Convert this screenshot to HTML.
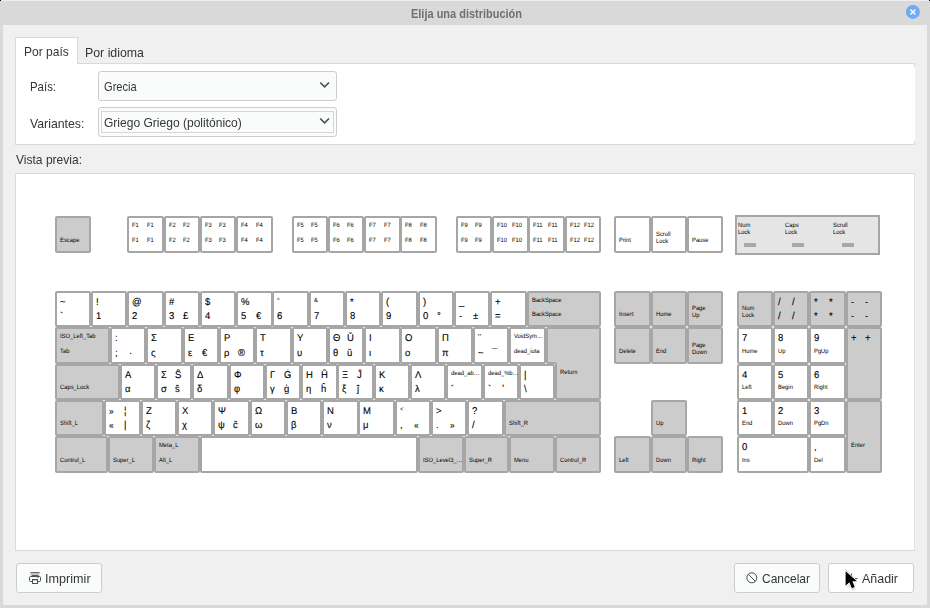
<!DOCTYPE html>
<html><head><meta charset="utf-8"><style>
html,body{margin:0;padding:0;width:930px;height:608px;overflow:hidden;background:#d9d9d9;}
body{position:relative;font-family:"Liberation Sans",sans-serif;}
.t{position:absolute;white-space:nowrap;transform-origin:0 0;line-height:1;}
.a{position:absolute;box-sizing:border-box;}
</style></head><body>
<div class="a" style="left:0;top:0;width:930px;height:1px;background:#efefef"></div>
<div class="a" style="left:0;top:0;width:1px;height:1px;background:#000"></div>
<div class="a" style="left:929px;top:0;width:1px;height:1px;background:#000"></div>
<div class="a" style="left:3px;top:25px;width:924px;height:580px;background:#f0f0f0"></div>
<!-- close button -->
<svg class="a" style="left:0;top:0" width="930" height="608">
<circle cx="912.9" cy="11.9" r="7" fill="#6eabf5"/>
<path d="M910.4,9.4 L915.4,14.4 M915.4,9.4 L910.4,14.4" stroke="#fff" stroke-width="1.4"/>
</svg>
<!-- notebook -->
<div class="a" style="left:15px;top:63px;width:900px;height:82px;background:#fff;border:1px solid #d9d9d9;border-right:none"></div>
<div class="a" style="left:914px;top:63px;width:1px;height:4px;background:#d9d9d9"></div>
<div class="a" style="left:914px;top:141px;width:1px;height:4px;background:#d9d9d9"></div>
<div class="a" style="left:15px;top:37px;width:63px;height:27px;background:#fff;border:1px solid #d9d9d9;border-bottom:none"></div>
<!-- combos -->
<div class="a" style="left:98px;top:71px;width:239px;height:30px;background:#fafbfb;border:1px solid #cdcdcd;border-radius:3px"></div>
<div class="a" style="left:98px;top:107px;width:239px;height:30px;background:#fafbfb;border:1px solid #cdcdcd;border-radius:3px"></div>
<div class="a" style="left:101px;top:111px;width:233px;height:22px;border:1px solid #d6d6d6"></div>
<svg class="a" style="left:0;top:0" width="930" height="608">
<path d="M320.2,82.5 L324.6,86.9 L329,82.5" fill="none" stroke="#4d4d4d" stroke-width="1.6"/>
<path d="M320.2,118.5 L324.6,122.9 L329,118.5" fill="none" stroke="#4d4d4d" stroke-width="1.6"/>
</svg>
<!-- preview -->
<div class="a" style="left:15px;top:173px;width:900px;height:378px;background:#fff;border:1px solid #dadada;border-right-color:#e3e3e3"></div>
<svg class="a" style="left:0;top:0" width="930" height="608">
<rect x="56" y="217" width="34" height="35" rx="1" fill="#cccccc"/>
<rect x="56" y="217" width="34" height="35" rx="1" fill="none" stroke="#a6a6a6" stroke-width="2"/>
<rect x="128" y="217" width="35" height="35" rx="1" fill="#ffffff"/>
<rect x="128" y="217" width="35" height="35" rx="1" fill="none" stroke="#a6a6a6" stroke-width="2"/>
<rect x="165" y="217" width="34" height="35" rx="1" fill="#ffffff"/>
<rect x="165" y="217" width="34" height="35" rx="1" fill="none" stroke="#a6a6a6" stroke-width="2"/>
<rect x="201" y="217" width="34" height="35" rx="1" fill="#ffffff"/>
<rect x="201" y="217" width="34" height="35" rx="1" fill="none" stroke="#a6a6a6" stroke-width="2"/>
<rect x="237" y="217" width="35" height="35" rx="1" fill="#ffffff"/>
<rect x="237" y="217" width="35" height="35" rx="1" fill="none" stroke="#a6a6a6" stroke-width="2"/>
<rect x="293" y="217" width="34" height="35" rx="1" fill="#ffffff"/>
<rect x="293" y="217" width="34" height="35" rx="1" fill="none" stroke="#a6a6a6" stroke-width="2"/>
<rect x="329" y="217" width="34" height="35" rx="1" fill="#ffffff"/>
<rect x="329" y="217" width="34" height="35" rx="1" fill="none" stroke="#a6a6a6" stroke-width="2"/>
<rect x="365" y="217" width="35" height="35" rx="1" fill="#ffffff"/>
<rect x="365" y="217" width="35" height="35" rx="1" fill="none" stroke="#a6a6a6" stroke-width="2"/>
<rect x="401" y="217" width="35" height="35" rx="1" fill="#ffffff"/>
<rect x="401" y="217" width="35" height="35" rx="1" fill="none" stroke="#a6a6a6" stroke-width="2"/>
<rect x="457" y="217" width="34" height="35" rx="1" fill="#ffffff"/>
<rect x="457" y="217" width="34" height="35" rx="1" fill="none" stroke="#a6a6a6" stroke-width="2"/>
<rect x="493" y="217" width="35" height="35" rx="1" fill="#ffffff"/>
<rect x="493" y="217" width="35" height="35" rx="1" fill="none" stroke="#a6a6a6" stroke-width="2"/>
<rect x="529" y="217" width="35" height="35" rx="1" fill="#ffffff"/>
<rect x="529" y="217" width="35" height="35" rx="1" fill="none" stroke="#a6a6a6" stroke-width="2"/>
<rect x="566" y="217" width="34" height="35" rx="1" fill="#ffffff"/>
<rect x="566" y="217" width="34" height="35" rx="1" fill="none" stroke="#a6a6a6" stroke-width="2"/>
<rect x="615" y="217" width="35" height="35" rx="1" fill="#ffffff"/>
<rect x="615" y="217" width="35" height="35" rx="1" fill="none" stroke="#a6a6a6" stroke-width="2"/>
<rect x="652" y="217" width="34" height="35" rx="1" fill="#ffffff"/>
<rect x="652" y="217" width="34" height="35" rx="1" fill="none" stroke="#a6a6a6" stroke-width="2"/>
<rect x="688" y="217" width="34" height="35" rx="1" fill="#ffffff"/>
<rect x="688" y="217" width="34" height="35" rx="1" fill="none" stroke="#a6a6a6" stroke-width="2"/>
<rect x="56" y="292" width="34" height="34" rx="1" fill="#ffffff"/>
<rect x="56" y="292" width="34" height="34" rx="1" fill="none" stroke="#a6a6a6" stroke-width="2"/>
<rect x="92" y="292" width="34" height="34" rx="1" fill="#ffffff"/>
<rect x="92" y="292" width="34" height="34" rx="1" fill="none" stroke="#a6a6a6" stroke-width="2"/>
<rect x="128" y="292" width="35" height="34" rx="1" fill="#ffffff"/>
<rect x="128" y="292" width="35" height="34" rx="1" fill="none" stroke="#a6a6a6" stroke-width="2"/>
<rect x="165" y="292" width="34" height="34" rx="1" fill="#ffffff"/>
<rect x="165" y="292" width="34" height="34" rx="1" fill="none" stroke="#a6a6a6" stroke-width="2"/>
<rect x="201" y="292" width="34" height="34" rx="1" fill="#ffffff"/>
<rect x="201" y="292" width="34" height="34" rx="1" fill="none" stroke="#a6a6a6" stroke-width="2"/>
<rect x="237" y="292" width="35" height="34" rx="1" fill="#ffffff"/>
<rect x="237" y="292" width="35" height="34" rx="1" fill="none" stroke="#a6a6a6" stroke-width="2"/>
<rect x="273" y="292" width="35" height="34" rx="1" fill="#ffffff"/>
<rect x="273" y="292" width="35" height="34" rx="1" fill="none" stroke="#a6a6a6" stroke-width="2"/>
<rect x="310" y="292" width="34" height="34" rx="1" fill="#ffffff"/>
<rect x="310" y="292" width="34" height="34" rx="1" fill="none" stroke="#a6a6a6" stroke-width="2"/>
<rect x="346" y="292" width="34" height="34" rx="1" fill="#ffffff"/>
<rect x="346" y="292" width="34" height="34" rx="1" fill="none" stroke="#a6a6a6" stroke-width="2"/>
<rect x="382" y="292" width="35" height="34" rx="1" fill="#ffffff"/>
<rect x="382" y="292" width="35" height="34" rx="1" fill="none" stroke="#a6a6a6" stroke-width="2"/>
<rect x="419" y="292" width="34" height="34" rx="1" fill="#ffffff"/>
<rect x="419" y="292" width="34" height="34" rx="1" fill="none" stroke="#a6a6a6" stroke-width="2"/>
<rect x="455" y="292" width="34" height="34" rx="1" fill="#ffffff"/>
<rect x="455" y="292" width="34" height="34" rx="1" fill="none" stroke="#a6a6a6" stroke-width="2"/>
<rect x="491" y="292" width="35" height="34" rx="1" fill="#ffffff"/>
<rect x="491" y="292" width="35" height="34" rx="1" fill="none" stroke="#a6a6a6" stroke-width="2"/>
<rect x="528" y="292" width="72" height="34" rx="1" fill="#cccccc"/>
<rect x="528" y="292" width="72" height="34" rx="1" fill="none" stroke="#a6a6a6" stroke-width="2"/>
<rect x="56" y="328" width="53" height="35" rx="1" fill="#cccccc"/>
<rect x="56" y="328" width="53" height="35" rx="1" fill="none" stroke="#a6a6a6" stroke-width="2"/>
<rect x="111" y="328" width="34" height="35" rx="1" fill="#ffffff"/>
<rect x="111" y="328" width="34" height="35" rx="1" fill="none" stroke="#a6a6a6" stroke-width="2"/>
<rect x="147" y="328" width="35" height="35" rx="1" fill="#ffffff"/>
<rect x="147" y="328" width="35" height="35" rx="1" fill="none" stroke="#a6a6a6" stroke-width="2"/>
<rect x="184" y="328" width="34" height="35" rx="1" fill="#ffffff"/>
<rect x="184" y="328" width="34" height="35" rx="1" fill="none" stroke="#a6a6a6" stroke-width="2"/>
<rect x="220" y="328" width="34" height="35" rx="1" fill="#ffffff"/>
<rect x="220" y="328" width="34" height="35" rx="1" fill="none" stroke="#a6a6a6" stroke-width="2"/>
<rect x="256" y="328" width="35" height="35" rx="1" fill="#ffffff"/>
<rect x="256" y="328" width="35" height="35" rx="1" fill="none" stroke="#a6a6a6" stroke-width="2"/>
<rect x="293" y="328" width="34" height="35" rx="1" fill="#ffffff"/>
<rect x="293" y="328" width="34" height="35" rx="1" fill="none" stroke="#a6a6a6" stroke-width="2"/>
<rect x="329" y="328" width="34" height="35" rx="1" fill="#ffffff"/>
<rect x="329" y="328" width="34" height="35" rx="1" fill="none" stroke="#a6a6a6" stroke-width="2"/>
<rect x="365" y="328" width="35" height="35" rx="1" fill="#ffffff"/>
<rect x="365" y="328" width="35" height="35" rx="1" fill="none" stroke="#a6a6a6" stroke-width="2"/>
<rect x="401" y="328" width="35" height="35" rx="1" fill="#ffffff"/>
<rect x="401" y="328" width="35" height="35" rx="1" fill="none" stroke="#a6a6a6" stroke-width="2"/>
<rect x="438" y="328" width="34" height="35" rx="1" fill="#ffffff"/>
<rect x="438" y="328" width="34" height="35" rx="1" fill="none" stroke="#a6a6a6" stroke-width="2"/>
<rect x="474" y="328" width="34" height="35" rx="1" fill="#ffffff"/>
<rect x="474" y="328" width="34" height="35" rx="1" fill="none" stroke="#a6a6a6" stroke-width="2"/>
<rect x="510" y="328" width="35" height="35" rx="1" fill="#ffffff"/>
<rect x="510" y="328" width="35" height="35" rx="1" fill="none" stroke="#a6a6a6" stroke-width="2"/>
<path d="M547.0,329.0 Q547,328 548.0,328.0 L599.0,328.0 Q600,328 600.0,329.0 L600.0,398.0 Q600,399 599.0,399.0 L557.0,399.0 Q556,399 556.0,398.0 L556.0,364.0 Q556,363 555.0,363.0 L548.0,363.0 Q547,363 547.0,362.0 Z" fill="#cccccc" stroke="#a6a6a6" stroke-width="2"/>
<rect x="56" y="365" width="63" height="34" rx="1" fill="#cccccc"/>
<rect x="56" y="365" width="63" height="34" rx="1" fill="none" stroke="#a6a6a6" stroke-width="2"/>
<rect x="121" y="365" width="34" height="34" rx="1" fill="#ffffff"/>
<rect x="121" y="365" width="34" height="34" rx="1" fill="none" stroke="#a6a6a6" stroke-width="2"/>
<rect x="157" y="365" width="34" height="34" rx="1" fill="#ffffff"/>
<rect x="157" y="365" width="34" height="34" rx="1" fill="none" stroke="#a6a6a6" stroke-width="2"/>
<rect x="193" y="365" width="35" height="34" rx="1" fill="#ffffff"/>
<rect x="193" y="365" width="35" height="34" rx="1" fill="none" stroke="#a6a6a6" stroke-width="2"/>
<rect x="230" y="365" width="34" height="34" rx="1" fill="#ffffff"/>
<rect x="230" y="365" width="34" height="34" rx="1" fill="none" stroke="#a6a6a6" stroke-width="2"/>
<rect x="266" y="365" width="34" height="34" rx="1" fill="#ffffff"/>
<rect x="266" y="365" width="34" height="34" rx="1" fill="none" stroke="#a6a6a6" stroke-width="2"/>
<rect x="302" y="365" width="35" height="34" rx="1" fill="#ffffff"/>
<rect x="302" y="365" width="35" height="34" rx="1" fill="none" stroke="#a6a6a6" stroke-width="2"/>
<rect x="338" y="365" width="35" height="34" rx="1" fill="#ffffff"/>
<rect x="338" y="365" width="35" height="34" rx="1" fill="none" stroke="#a6a6a6" stroke-width="2"/>
<rect x="375" y="365" width="34" height="34" rx="1" fill="#ffffff"/>
<rect x="375" y="365" width="34" height="34" rx="1" fill="none" stroke="#a6a6a6" stroke-width="2"/>
<rect x="411" y="365" width="34" height="34" rx="1" fill="#ffffff"/>
<rect x="411" y="365" width="34" height="34" rx="1" fill="none" stroke="#a6a6a6" stroke-width="2"/>
<rect x="447" y="365" width="35" height="34" rx="1" fill="#ffffff"/>
<rect x="447" y="365" width="35" height="34" rx="1" fill="none" stroke="#a6a6a6" stroke-width="2"/>
<rect x="484" y="365" width="34" height="34" rx="1" fill="#ffffff"/>
<rect x="484" y="365" width="34" height="34" rx="1" fill="none" stroke="#a6a6a6" stroke-width="2"/>
<rect x="520" y="365" width="34" height="34" rx="1" fill="#ffffff"/>
<rect x="520" y="365" width="34" height="34" rx="1" fill="none" stroke="#a6a6a6" stroke-width="2"/>
<rect x="56" y="401" width="47" height="34" rx="1" fill="#cccccc"/>
<rect x="56" y="401" width="47" height="34" rx="1" fill="none" stroke="#a6a6a6" stroke-width="2"/>
<rect x="105" y="401" width="35" height="34" rx="1" fill="#ffffff"/>
<rect x="105" y="401" width="35" height="34" rx="1" fill="none" stroke="#a6a6a6" stroke-width="2"/>
<rect x="142" y="401" width="34" height="34" rx="1" fill="#ffffff"/>
<rect x="142" y="401" width="34" height="34" rx="1" fill="none" stroke="#a6a6a6" stroke-width="2"/>
<rect x="178" y="401" width="34" height="34" rx="1" fill="#ffffff"/>
<rect x="178" y="401" width="34" height="34" rx="1" fill="none" stroke="#a6a6a6" stroke-width="2"/>
<rect x="214" y="401" width="35" height="34" rx="1" fill="#ffffff"/>
<rect x="214" y="401" width="35" height="34" rx="1" fill="none" stroke="#a6a6a6" stroke-width="2"/>
<rect x="251" y="401" width="34" height="34" rx="1" fill="#ffffff"/>
<rect x="251" y="401" width="34" height="34" rx="1" fill="none" stroke="#a6a6a6" stroke-width="2"/>
<rect x="287" y="401" width="34" height="34" rx="1" fill="#ffffff"/>
<rect x="287" y="401" width="34" height="34" rx="1" fill="none" stroke="#a6a6a6" stroke-width="2"/>
<rect x="323" y="401" width="35" height="34" rx="1" fill="#ffffff"/>
<rect x="323" y="401" width="35" height="34" rx="1" fill="none" stroke="#a6a6a6" stroke-width="2"/>
<rect x="359" y="401" width="35" height="34" rx="1" fill="#ffffff"/>
<rect x="359" y="401" width="35" height="34" rx="1" fill="none" stroke="#a6a6a6" stroke-width="2"/>
<rect x="396" y="401" width="34" height="34" rx="1" fill="#ffffff"/>
<rect x="396" y="401" width="34" height="34" rx="1" fill="none" stroke="#a6a6a6" stroke-width="2"/>
<rect x="432" y="401" width="34" height="34" rx="1" fill="#ffffff"/>
<rect x="432" y="401" width="34" height="34" rx="1" fill="none" stroke="#a6a6a6" stroke-width="2"/>
<rect x="468" y="401" width="35" height="34" rx="1" fill="#ffffff"/>
<rect x="468" y="401" width="35" height="34" rx="1" fill="none" stroke="#a6a6a6" stroke-width="2"/>
<rect x="505" y="401" width="95" height="34" rx="1" fill="#cccccc"/>
<rect x="505" y="401" width="95" height="34" rx="1" fill="none" stroke="#a6a6a6" stroke-width="2"/>
<rect x="56" y="437" width="51" height="35" rx="1" fill="#cccccc"/>
<rect x="56" y="437" width="51" height="35" rx="1" fill="none" stroke="#a6a6a6" stroke-width="2"/>
<rect x="109" y="437" width="44" height="35" rx="1" fill="#cccccc"/>
<rect x="109" y="437" width="44" height="35" rx="1" fill="none" stroke="#a6a6a6" stroke-width="2"/>
<rect x="155" y="437" width="44" height="35" rx="1" fill="#cccccc"/>
<rect x="155" y="437" width="44" height="35" rx="1" fill="none" stroke="#a6a6a6" stroke-width="2"/>
<rect x="201" y="437" width="216" height="35" rx="1" fill="#ffffff"/>
<rect x="201" y="437" width="216" height="35" rx="1" fill="none" stroke="#a6a6a6" stroke-width="2"/>
<rect x="419" y="437" width="44" height="35" rx="1" fill="#cccccc"/>
<rect x="419" y="437" width="44" height="35" rx="1" fill="none" stroke="#a6a6a6" stroke-width="2"/>
<rect x="465" y="437" width="43" height="35" rx="1" fill="#cccccc"/>
<rect x="465" y="437" width="43" height="35" rx="1" fill="none" stroke="#a6a6a6" stroke-width="2"/>
<rect x="510" y="437" width="44" height="35" rx="1" fill="#cccccc"/>
<rect x="510" y="437" width="44" height="35" rx="1" fill="none" stroke="#a6a6a6" stroke-width="2"/>
<rect x="556" y="437" width="44" height="35" rx="1" fill="#cccccc"/>
<rect x="556" y="437" width="44" height="35" rx="1" fill="none" stroke="#a6a6a6" stroke-width="2"/>
<rect x="615" y="292" width="35" height="34" rx="1" fill="#cccccc"/>
<rect x="615" y="292" width="35" height="34" rx="1" fill="none" stroke="#a6a6a6" stroke-width="2"/>
<rect x="652" y="292" width="34" height="34" rx="1" fill="#cccccc"/>
<rect x="652" y="292" width="34" height="34" rx="1" fill="none" stroke="#a6a6a6" stroke-width="2"/>
<rect x="688" y="292" width="34" height="34" rx="1" fill="#cccccc"/>
<rect x="688" y="292" width="34" height="34" rx="1" fill="none" stroke="#a6a6a6" stroke-width="2"/>
<rect x="615" y="328" width="35" height="35" rx="1" fill="#cccccc"/>
<rect x="615" y="328" width="35" height="35" rx="1" fill="none" stroke="#a6a6a6" stroke-width="2"/>
<rect x="652" y="328" width="34" height="35" rx="1" fill="#cccccc"/>
<rect x="652" y="328" width="34" height="35" rx="1" fill="none" stroke="#a6a6a6" stroke-width="2"/>
<rect x="688" y="328" width="34" height="35" rx="1" fill="#cccccc"/>
<rect x="688" y="328" width="34" height="35" rx="1" fill="none" stroke="#a6a6a6" stroke-width="2"/>
<rect x="652" y="401" width="34" height="34" rx="1" fill="#cccccc"/>
<rect x="652" y="401" width="34" height="34" rx="1" fill="none" stroke="#a6a6a6" stroke-width="2"/>
<rect x="615" y="437" width="35" height="35" rx="1" fill="#cccccc"/>
<rect x="615" y="437" width="35" height="35" rx="1" fill="none" stroke="#a6a6a6" stroke-width="2"/>
<rect x="652" y="437" width="34" height="35" rx="1" fill="#cccccc"/>
<rect x="652" y="437" width="34" height="35" rx="1" fill="none" stroke="#a6a6a6" stroke-width="2"/>
<rect x="688" y="437" width="34" height="35" rx="1" fill="#cccccc"/>
<rect x="688" y="437" width="34" height="35" rx="1" fill="none" stroke="#a6a6a6" stroke-width="2"/>
<rect x="738" y="292" width="34" height="34" rx="1" fill="#cccccc"/>
<rect x="738" y="292" width="34" height="34" rx="1" fill="none" stroke="#a6a6a6" stroke-width="2"/>
<rect x="774" y="292" width="34" height="34" rx="1" fill="#cccccc"/>
<rect x="774" y="292" width="34" height="34" rx="1" fill="none" stroke="#a6a6a6" stroke-width="2"/>
<rect x="810" y="292" width="35" height="34" rx="1" fill="#cccccc"/>
<rect x="810" y="292" width="35" height="34" rx="1" fill="none" stroke="#a6a6a6" stroke-width="2"/>
<rect x="847" y="292" width="34" height="34" rx="1" fill="#cccccc"/>
<rect x="847" y="292" width="34" height="34" rx="1" fill="none" stroke="#a6a6a6" stroke-width="2"/>
<rect x="738" y="328" width="34" height="35" rx="1" fill="#ffffff"/>
<rect x="738" y="328" width="34" height="35" rx="1" fill="none" stroke="#a6a6a6" stroke-width="2"/>
<rect x="774" y="328" width="34" height="35" rx="1" fill="#ffffff"/>
<rect x="774" y="328" width="34" height="35" rx="1" fill="none" stroke="#a6a6a6" stroke-width="2"/>
<rect x="810" y="328" width="35" height="35" rx="1" fill="#ffffff"/>
<rect x="810" y="328" width="35" height="35" rx="1" fill="none" stroke="#a6a6a6" stroke-width="2"/>
<rect x="847" y="328" width="34" height="71" rx="1" fill="#cccccc"/>
<rect x="847" y="328" width="34" height="71" rx="1" fill="none" stroke="#a6a6a6" stroke-width="2"/>
<rect x="738" y="365" width="34" height="34" rx="1" fill="#ffffff"/>
<rect x="738" y="365" width="34" height="34" rx="1" fill="none" stroke="#a6a6a6" stroke-width="2"/>
<rect x="774" y="365" width="34" height="34" rx="1" fill="#ffffff"/>
<rect x="774" y="365" width="34" height="34" rx="1" fill="none" stroke="#a6a6a6" stroke-width="2"/>
<rect x="810" y="365" width="35" height="34" rx="1" fill="#ffffff"/>
<rect x="810" y="365" width="35" height="34" rx="1" fill="none" stroke="#a6a6a6" stroke-width="2"/>
<rect x="738" y="401" width="34" height="34" rx="1" fill="#ffffff"/>
<rect x="738" y="401" width="34" height="34" rx="1" fill="none" stroke="#a6a6a6" stroke-width="2"/>
<rect x="774" y="401" width="34" height="34" rx="1" fill="#ffffff"/>
<rect x="774" y="401" width="34" height="34" rx="1" fill="none" stroke="#a6a6a6" stroke-width="2"/>
<rect x="810" y="401" width="35" height="34" rx="1" fill="#ffffff"/>
<rect x="810" y="401" width="35" height="34" rx="1" fill="none" stroke="#a6a6a6" stroke-width="2"/>
<rect x="847" y="401" width="34" height="71" rx="1" fill="#cccccc"/>
<rect x="847" y="401" width="34" height="71" rx="1" fill="none" stroke="#a6a6a6" stroke-width="2"/>
<rect x="738" y="437" width="70" height="35" rx="1" fill="#ffffff"/>
<rect x="738" y="437" width="70" height="35" rx="1" fill="none" stroke="#a6a6a6" stroke-width="2"/>
<rect x="810" y="437" width="35" height="35" rx="1" fill="#ffffff"/>
<rect x="810" y="437" width="35" height="35" rx="1" fill="none" stroke="#a6a6a6" stroke-width="2"/>
<rect x="736" y="216" width="143" height="38" fill="#e5e5e5" stroke="#a6a6a6" stroke-width="2"/>
<rect x="744" y="243" width="12" height="4" fill="#a8a8a8"/>
<rect x="792" y="243" width="12" height="4" fill="#a8a8a8"/>
<rect x="842" y="243" width="12" height="4" fill="#a8a8a8"/>
<g font-family="Liberation Sans" fill="#000" text-rendering="geometricPrecision">
<text transform="translate(60,242) scale(0.93,1)" font-size="6.25">Escape</text>
<text transform="translate(132,227) scale(0.93,1)" font-size="6.25">F1</text>
<text transform="translate(147,227) scale(0.93,1)" font-size="6.25">F1</text>
<text transform="translate(132,242) scale(0.93,1)" font-size="6.25">F1</text>
<text transform="translate(147,242) scale(0.93,1)" font-size="6.25">F1</text>
<text transform="translate(169,227) scale(0.93,1)" font-size="6.25">F2</text>
<text transform="translate(183,227) scale(0.93,1)" font-size="6.25">F2</text>
<text transform="translate(169,242) scale(0.93,1)" font-size="6.25">F2</text>
<text transform="translate(183,242) scale(0.93,1)" font-size="6.25">F2</text>
<text transform="translate(205,227) scale(0.93,1)" font-size="6.25">F3</text>
<text transform="translate(219,227) scale(0.93,1)" font-size="6.25">F3</text>
<text transform="translate(205,242) scale(0.93,1)" font-size="6.25">F3</text>
<text transform="translate(219,242) scale(0.93,1)" font-size="6.25">F3</text>
<text transform="translate(241,227) scale(0.93,1)" font-size="6.25">F4</text>
<text transform="translate(256,227) scale(0.93,1)" font-size="6.25">F4</text>
<text transform="translate(241,242) scale(0.93,1)" font-size="6.25">F4</text>
<text transform="translate(256,242) scale(0.93,1)" font-size="6.25">F4</text>
<text transform="translate(297,227) scale(0.93,1)" font-size="6.25">F5</text>
<text transform="translate(311,227) scale(0.93,1)" font-size="6.25">F5</text>
<text transform="translate(297,242) scale(0.93,1)" font-size="6.25">F5</text>
<text transform="translate(311,242) scale(0.93,1)" font-size="6.25">F5</text>
<text transform="translate(333,227) scale(0.93,1)" font-size="6.25">F6</text>
<text transform="translate(347,227) scale(0.93,1)" font-size="6.25">F6</text>
<text transform="translate(333,242) scale(0.93,1)" font-size="6.25">F6</text>
<text transform="translate(347,242) scale(0.93,1)" font-size="6.25">F6</text>
<text transform="translate(369,227) scale(0.93,1)" font-size="6.25">F7</text>
<text transform="translate(384,227) scale(0.93,1)" font-size="6.25">F7</text>
<text transform="translate(369,242) scale(0.93,1)" font-size="6.25">F7</text>
<text transform="translate(384,242) scale(0.93,1)" font-size="6.25">F7</text>
<text transform="translate(405,227) scale(0.93,1)" font-size="6.25">F8</text>
<text transform="translate(420,227) scale(0.93,1)" font-size="6.25">F8</text>
<text transform="translate(405,242) scale(0.93,1)" font-size="6.25">F8</text>
<text transform="translate(420,242) scale(0.93,1)" font-size="6.25">F8</text>
<text transform="translate(461,227) scale(0.93,1)" font-size="6.25">F9</text>
<text transform="translate(475,227) scale(0.93,1)" font-size="6.25">F9</text>
<text transform="translate(461,242) scale(0.93,1)" font-size="6.25">F9</text>
<text transform="translate(475,242) scale(0.93,1)" font-size="6.25">F9</text>
<text transform="translate(497,227) scale(0.93,1)" font-size="6.25">F10</text>
<text transform="translate(512,227) scale(0.93,1)" font-size="6.25">F10</text>
<text transform="translate(497,242) scale(0.93,1)" font-size="6.25">F10</text>
<text transform="translate(512,242) scale(0.93,1)" font-size="6.25">F10</text>
<text transform="translate(533,227) scale(0.93,1)" font-size="6.25">F11</text>
<text transform="translate(548,227) scale(0.93,1)" font-size="6.25">F11</text>
<text transform="translate(533,242) scale(0.93,1)" font-size="6.25">F11</text>
<text transform="translate(548,242) scale(0.93,1)" font-size="6.25">F11</text>
<text transform="translate(570,227) scale(0.93,1)" font-size="6.25">F12</text>
<text transform="translate(584,227) scale(0.93,1)" font-size="6.25">F12</text>
<text transform="translate(570,242) scale(0.93,1)" font-size="6.25">F12</text>
<text transform="translate(584,242) scale(0.93,1)" font-size="6.25">F12</text>
<text transform="translate(619,242) scale(0.93,1)" font-size="6.25">Print</text>
<text transform="translate(656,236) scale(0.93,1)" font-size="6.25">Scroll</text>
<text transform="translate(656,243) scale(0.93,1)" font-size="6.25">Lock</text>
<text transform="translate(692,242) scale(0.93,1)" font-size="6.25">Pause</text>
<text transform="translate(60,305) scale(0.96,1)" font-size="9.9" stroke="#000" stroke-width="0.12">~</text>
<text transform="translate(60,319) scale(0.96,1)" font-size="9.9" stroke="#000" stroke-width="0.12">`</text>
<text transform="translate(96,305) scale(0.96,1)" font-size="9.9" stroke="#000" stroke-width="0.12">!</text>
<text transform="translate(96,319) scale(0.96,1)" font-size="9.9" stroke="#000" stroke-width="0.12">1</text>
<text transform="translate(132,305) scale(0.96,1)" font-size="9.9" stroke="#000" stroke-width="0.12">@</text>
<text transform="translate(132,319) scale(0.96,1)" font-size="9.9" stroke="#000" stroke-width="0.12">2</text>
<text transform="translate(169,305) scale(0.96,1)" font-size="9.9" stroke="#000" stroke-width="0.12">#</text>
<text transform="translate(169,319) scale(0.96,1)" font-size="9.9" stroke="#000" stroke-width="0.12">3</text>
<text transform="translate(183,319) scale(0.96,1)" font-size="9.9" stroke="#000" stroke-width="0.12">£</text>
<text transform="translate(205,305) scale(0.96,1)" font-size="9.9" stroke="#000" stroke-width="0.12">$</text>
<text transform="translate(205,319) scale(0.96,1)" font-size="9.9" stroke="#000" stroke-width="0.12">4</text>
<text transform="translate(241,305) scale(0.96,1)" font-size="9.9" stroke="#000" stroke-width="0.12">%</text>
<text transform="translate(241,319) scale(0.96,1)" font-size="9.9" stroke="#000" stroke-width="0.12">5</text>
<text transform="translate(256,319) scale(0.96,1)" font-size="9.9" stroke="#000" stroke-width="0.12">€</text>
<text transform="translate(277,302) scale(0.93,1)" font-size="6.25">^</text>
<text transform="translate(277,319) scale(0.96,1)" font-size="9.9" stroke="#000" stroke-width="0.12">6</text>
<text transform="translate(314,302) scale(0.93,1)" font-size="6.25">&amp;</text>
<text transform="translate(314,319) scale(0.96,1)" font-size="9.9" stroke="#000" stroke-width="0.12">7</text>
<text transform="translate(350,305) scale(0.96,1)" font-size="9.9" stroke="#000" stroke-width="0.12">*</text>
<text transform="translate(350,319) scale(0.96,1)" font-size="9.9" stroke="#000" stroke-width="0.12">8</text>
<text transform="translate(386,305) scale(0.96,1)" font-size="9.9" stroke="#000" stroke-width="0.12">(</text>
<text transform="translate(386,319) scale(0.96,1)" font-size="9.9" stroke="#000" stroke-width="0.12">9</text>
<text transform="translate(423,305) scale(0.96,1)" font-size="9.9" stroke="#000" stroke-width="0.12">)</text>
<text transform="translate(423,319) scale(0.96,1)" font-size="9.9" stroke="#000" stroke-width="0.12">0</text>
<text transform="translate(437,319) scale(0.96,1)" font-size="9.9" stroke="#000" stroke-width="0.12">°</text>
<text transform="translate(459,305) scale(0.96,1)" font-size="9.9" stroke="#000" stroke-width="0.12">_</text>
<text transform="translate(459,319) scale(0.96,1)" font-size="9.9" stroke="#000" stroke-width="0.12">-</text>
<text transform="translate(473,319) scale(0.96,1)" font-size="9.9" stroke="#000" stroke-width="0.12">±</text>
<text transform="translate(495,305) scale(0.96,1)" font-size="9.9" stroke="#000" stroke-width="0.12">+</text>
<text transform="translate(495,319) scale(0.96,1)" font-size="9.9" stroke="#000" stroke-width="0.12">=</text>
<text transform="translate(532,302) scale(0.93,1)" font-size="6.25">BackSpace</text>
<text transform="translate(532,316) scale(0.93,1)" font-size="6.25">BackSpace</text>
<text transform="translate(60,338) scale(0.93,1)" font-size="6.25">ISO_Left_Tab</text>
<text transform="translate(60,353) scale(0.93,1)" font-size="6.25">Tab</text>
<text transform="translate(115,341) scale(0.96,1)" font-size="9.9" stroke="#000" stroke-width="0.12">:</text>
<text transform="translate(115,356) scale(0.96,1)" font-size="9.9" stroke="#000" stroke-width="0.12">;</text>
<text transform="translate(129,356) scale(0.96,1)" font-size="9.9" stroke="#000" stroke-width="0.12">·</text>
<text transform="translate(151,341) scale(0.96,1)" font-size="9.9" stroke="#000" stroke-width="0.12">Σ</text>
<text transform="translate(151,356) scale(0.96,1)" font-size="9.9" stroke="#000" stroke-width="0.12">ς</text>
<text transform="translate(188,341) scale(0.96,1)" font-size="9.9" stroke="#000" stroke-width="0.12">Ε</text>
<text transform="translate(188,356) scale(0.96,1)" font-size="9.9" stroke="#000" stroke-width="0.12">ε</text>
<text transform="translate(202,356) scale(0.96,1)" font-size="9.9" stroke="#000" stroke-width="0.12">€</text>
<text transform="translate(224,341) scale(0.96,1)" font-size="9.9" stroke="#000" stroke-width="0.12">Ρ</text>
<text transform="translate(224,356) scale(0.96,1)" font-size="9.9" stroke="#000" stroke-width="0.12">ρ</text>
<text transform="translate(238,356) scale(0.96,1)" font-size="9.9" stroke="#000" stroke-width="0.12">®</text>
<text transform="translate(260,341) scale(0.96,1)" font-size="9.9" stroke="#000" stroke-width="0.12">Τ</text>
<text transform="translate(260,356) scale(0.96,1)" font-size="9.9" stroke="#000" stroke-width="0.12">τ</text>
<text transform="translate(297,341) scale(0.96,1)" font-size="9.9" stroke="#000" stroke-width="0.12">Υ</text>
<text transform="translate(297,356) scale(0.96,1)" font-size="9.9" stroke="#000" stroke-width="0.12">υ</text>
<text transform="translate(333,341) scale(0.96,1)" font-size="9.9" stroke="#000" stroke-width="0.12">Θ</text>
<text transform="translate(333,356) scale(0.96,1)" font-size="9.9" stroke="#000" stroke-width="0.12">θ</text>
<text transform="translate(347,341) scale(0.96,1)" font-size="9.9" stroke="#000" stroke-width="0.12">Ŭ</text>
<text transform="translate(347,356) scale(0.96,1)" font-size="9.9" stroke="#000" stroke-width="0.12">ŭ</text>
<text transform="translate(369,341) scale(0.96,1)" font-size="9.9" stroke="#000" stroke-width="0.12">Ι</text>
<text transform="translate(369,356) scale(0.96,1)" font-size="9.9" stroke="#000" stroke-width="0.12">ι</text>
<text transform="translate(405,341) scale(0.96,1)" font-size="9.9" stroke="#000" stroke-width="0.12">Ο</text>
<text transform="translate(405,356) scale(0.96,1)" font-size="9.9" stroke="#000" stroke-width="0.12">ο</text>
<text transform="translate(442,341) scale(0.96,1)" font-size="9.9" stroke="#000" stroke-width="0.12">Π</text>
<text transform="translate(442,356) scale(0.96,1)" font-size="9.9" stroke="#000" stroke-width="0.12">π</text>
<text transform="translate(478,341) scale(0.96,1)" font-size="9.9" stroke="#000" stroke-width="0.12">¨</text>
<text transform="translate(478,356) scale(0.96,1)" font-size="9.9" stroke="#000" stroke-width="0.12">~</text>
<text transform="translate(492,356) scale(0.96,1)" font-size="9.9" stroke="#000" stroke-width="0.12">¯</text>
<text transform="translate(514,338) scale(0.93,1)" font-size="6.25">VoidSym…</text>
<text transform="translate(514,353) scale(0.93,1)" font-size="6.25">dead_iota</text>
<text transform="translate(560,374) scale(0.93,1)" font-size="6.25">Return</text>
<text transform="translate(60,389) scale(0.93,1)" font-size="6.25">Caps_Lock</text>
<text transform="translate(125,378) scale(0.96,1)" font-size="9.9" stroke="#000" stroke-width="0.12">Α</text>
<text transform="translate(125,392) scale(0.96,1)" font-size="9.9" stroke="#000" stroke-width="0.12">α</text>
<text transform="translate(161,378) scale(0.96,1)" font-size="9.9" stroke="#000" stroke-width="0.12">Σ</text>
<text transform="translate(161,392) scale(0.96,1)" font-size="9.9" stroke="#000" stroke-width="0.12">σ</text>
<text transform="translate(175,378) scale(0.96,1)" font-size="9.9" stroke="#000" stroke-width="0.12">Ŝ</text>
<text transform="translate(175,392) scale(0.96,1)" font-size="9.9" stroke="#000" stroke-width="0.12">ŝ</text>
<text transform="translate(197,378) scale(0.96,1)" font-size="9.9" stroke="#000" stroke-width="0.12">Δ</text>
<text transform="translate(197,392) scale(0.96,1)" font-size="9.9" stroke="#000" stroke-width="0.12">δ</text>
<text transform="translate(234,378) scale(0.96,1)" font-size="9.9" stroke="#000" stroke-width="0.12">Φ</text>
<text transform="translate(234,392) scale(0.96,1)" font-size="9.9" stroke="#000" stroke-width="0.12">φ</text>
<text transform="translate(270,378) scale(0.96,1)" font-size="9.9" stroke="#000" stroke-width="0.12">Γ</text>
<text transform="translate(270,392) scale(0.96,1)" font-size="9.9" stroke="#000" stroke-width="0.12">γ</text>
<text transform="translate(284,378) scale(0.96,1)" font-size="9.9" stroke="#000" stroke-width="0.12">Ġ</text>
<text transform="translate(284,392) scale(0.96,1)" font-size="9.9" stroke="#000" stroke-width="0.12">ġ</text>
<text transform="translate(306,378) scale(0.96,1)" font-size="9.9" stroke="#000" stroke-width="0.12">Η</text>
<text transform="translate(306,392) scale(0.96,1)" font-size="9.9" stroke="#000" stroke-width="0.12">η</text>
<text transform="translate(321,378) scale(0.96,1)" font-size="9.9" stroke="#000" stroke-width="0.12">Ĥ</text>
<text transform="translate(321,392) scale(0.96,1)" font-size="9.9" stroke="#000" stroke-width="0.12">ĥ</text>
<text transform="translate(342,378) scale(0.96,1)" font-size="9.9" stroke="#000" stroke-width="0.12">Ξ</text>
<text transform="translate(342,392) scale(0.96,1)" font-size="9.9" stroke="#000" stroke-width="0.12">ξ</text>
<text transform="translate(357,378) scale(0.96,1)" font-size="9.9" stroke="#000" stroke-width="0.12">Ĵ</text>
<text transform="translate(357,392) scale(0.96,1)" font-size="9.9" stroke="#000" stroke-width="0.12">ĵ</text>
<text transform="translate(379,378) scale(0.96,1)" font-size="9.9" stroke="#000" stroke-width="0.12">Κ</text>
<text transform="translate(379,392) scale(0.96,1)" font-size="9.9" stroke="#000" stroke-width="0.12">κ</text>
<text transform="translate(415,378) scale(0.96,1)" font-size="9.9" stroke="#000" stroke-width="0.12">Λ</text>
<text transform="translate(415,392) scale(0.96,1)" font-size="9.9" stroke="#000" stroke-width="0.12">λ</text>
<text transform="translate(451,375) scale(0.93,1)" font-size="6.25">dead_ab…</text>
<text transform="translate(451,392) scale(0.96,1)" font-size="9.9" stroke="#000" stroke-width="0.12">´</text>
<text transform="translate(488,375) scale(0.93,1)" font-size="6.25">dead_%b…</text>
<text transform="translate(488,392) scale(0.96,1)" font-size="9.9" stroke="#000" stroke-width="0.12">`</text>
<text transform="translate(502,392) scale(0.96,1)" font-size="9.9" stroke="#000" stroke-width="0.12">ʼ</text>
<text transform="translate(524,378) scale(0.96,1)" font-size="9.9" stroke="#000" stroke-width="0.12">|</text>
<text transform="translate(524,392) scale(0.96,1)" font-size="9.9" stroke="#000" stroke-width="0.12">\</text>
<text transform="translate(60,425) scale(0.93,1)" font-size="6.25">Shift_L</text>
<text transform="translate(109,414) scale(1.0,1)" font-size="8.4" stroke="#000" stroke-width="0.12">»</text>
<text transform="translate(109,428) scale(1.0,1)" font-size="8.4" stroke="#000" stroke-width="0.12">«</text>
<text transform="translate(124,414) scale(0.96,1)" font-size="9.9" stroke="#000" stroke-width="0.12">¦</text>
<text transform="translate(124,428) scale(0.96,1)" font-size="9.9" stroke="#000" stroke-width="0.12">|</text>
<text transform="translate(146,414) scale(0.96,1)" font-size="9.9" stroke="#000" stroke-width="0.12">Ζ</text>
<text transform="translate(146,428) scale(0.96,1)" font-size="9.9" stroke="#000" stroke-width="0.12">ζ</text>
<text transform="translate(182,414) scale(0.96,1)" font-size="9.9" stroke="#000" stroke-width="0.12">Χ</text>
<text transform="translate(182,428) scale(0.96,1)" font-size="9.9" stroke="#000" stroke-width="0.12">χ</text>
<text transform="translate(218,414) scale(0.96,1)" font-size="9.9" stroke="#000" stroke-width="0.12">Ψ</text>
<text transform="translate(218,428) scale(0.96,1)" font-size="9.9" stroke="#000" stroke-width="0.12">ψ</text>
<text transform="translate(233,428) scale(0.96,1)" font-size="9.9" stroke="#000" stroke-width="0.12">č</text>
<text transform="translate(255,414) scale(0.96,1)" font-size="9.9" stroke="#000" stroke-width="0.12">Ω</text>
<text transform="translate(255,428) scale(0.96,1)" font-size="9.9" stroke="#000" stroke-width="0.12">ω</text>
<text transform="translate(291,414) scale(0.96,1)" font-size="9.9" stroke="#000" stroke-width="0.12">Β</text>
<text transform="translate(291,428) scale(0.96,1)" font-size="9.9" stroke="#000" stroke-width="0.12">β</text>
<text transform="translate(327,414) scale(0.96,1)" font-size="9.9" stroke="#000" stroke-width="0.12">Ν</text>
<text transform="translate(327,428) scale(0.96,1)" font-size="9.9" stroke="#000" stroke-width="0.12">ν</text>
<text transform="translate(363,414) scale(0.96,1)" font-size="9.9" stroke="#000" stroke-width="0.12">Μ</text>
<text transform="translate(363,428) scale(0.96,1)" font-size="9.9" stroke="#000" stroke-width="0.12">μ</text>
<text transform="translate(400,411) scale(0.93,1)" font-size="6.25">&lt;</text>
<text transform="translate(400,428) scale(0.96,1)" font-size="9.9" stroke="#000" stroke-width="0.12">,</text>
<text transform="translate(414,428) scale(1.0,1)" font-size="8.4" stroke="#000" stroke-width="0.12">«</text>
<text transform="translate(436,414) scale(0.96,1)" font-size="9.9" stroke="#000" stroke-width="0.12">&gt;</text>
<text transform="translate(436,428) scale(0.96,1)" font-size="9.9" stroke="#000" stroke-width="0.12">.</text>
<text transform="translate(450,428) scale(1.0,1)" font-size="8.4" stroke="#000" stroke-width="0.12">»</text>
<text transform="translate(472,414) scale(0.96,1)" font-size="9.9" stroke="#000" stroke-width="0.12">?</text>
<text transform="translate(472,428) scale(0.96,1)" font-size="9.9" stroke="#000" stroke-width="0.12">/</text>
<text transform="translate(509,425) scale(0.93,1)" font-size="6.25">Shift_R</text>
<text transform="translate(60,462) scale(0.93,1)" font-size="6.25">Control_L</text>
<text transform="translate(113,462) scale(0.93,1)" font-size="6.25">Super_L</text>
<text transform="translate(159,447) scale(0.93,1)" font-size="6.25">Meta_L</text>
<text transform="translate(159,462) scale(0.93,1)" font-size="6.25">Alt_L</text>
<text transform="translate(423,462) scale(0.93,1)" font-size="6.25">ISO_Level3_…</text>
<text transform="translate(469,462) scale(0.93,1)" font-size="6.25">Super_R</text>
<text transform="translate(514,462) scale(0.93,1)" font-size="6.25">Menu</text>
<text transform="translate(560,462) scale(0.93,1)" font-size="6.25">Control_R</text>
<text transform="translate(619,316) scale(0.93,1)" font-size="6.25">Insert</text>
<text transform="translate(656,316) scale(0.93,1)" font-size="6.25">Home</text>
<text transform="translate(692,310) scale(0.93,1)" font-size="6.25">Page</text>
<text transform="translate(692,317) scale(0.93,1)" font-size="6.25">Up</text>
<text transform="translate(619,353) scale(0.93,1)" font-size="6.25">Delete</text>
<text transform="translate(656,353) scale(0.93,1)" font-size="6.25">End</text>
<text transform="translate(692,347) scale(0.93,1)" font-size="6.25">Page</text>
<text transform="translate(692,354) scale(0.93,1)" font-size="6.25">Down</text>
<text transform="translate(656,425) scale(0.93,1)" font-size="6.25">Up</text>
<text transform="translate(619,462) scale(0.93,1)" font-size="6.25">Left</text>
<text transform="translate(656,462) scale(0.93,1)" font-size="6.25">Down</text>
<text transform="translate(692,462) scale(0.93,1)" font-size="6.25">Right</text>
<text transform="translate(742,310) scale(0.93,1)" font-size="6.25">Num</text>
<text transform="translate(742,317) scale(0.93,1)" font-size="6.25">Lock</text>
<text transform="translate(778,305) scale(0.96,1)" font-size="9.9" stroke="#000" stroke-width="0.12">/</text>
<text transform="translate(792,305) scale(0.96,1)" font-size="9.9" stroke="#000" stroke-width="0.12">/</text>
<text transform="translate(778,319) scale(0.96,1)" font-size="9.9" stroke="#000" stroke-width="0.12">/</text>
<text transform="translate(792,319) scale(0.96,1)" font-size="9.9" stroke="#000" stroke-width="0.12">/</text>
<text transform="translate(814,305) scale(0.96,1)" font-size="9.9" stroke="#000" stroke-width="0.12">*</text>
<text transform="translate(829,305) scale(0.96,1)" font-size="9.9" stroke="#000" stroke-width="0.12">*</text>
<text transform="translate(814,319) scale(0.96,1)" font-size="9.9" stroke="#000" stroke-width="0.12">*</text>
<text transform="translate(829,319) scale(0.96,1)" font-size="9.9" stroke="#000" stroke-width="0.12">*</text>
<text transform="translate(851,305) scale(0.96,1)" font-size="9.9" stroke="#000" stroke-width="0.12">-</text>
<text transform="translate(865,305) scale(0.96,1)" font-size="9.9" stroke="#000" stroke-width="0.12">-</text>
<text transform="translate(851,319) scale(0.96,1)" font-size="9.9" stroke="#000" stroke-width="0.12">-</text>
<text transform="translate(865,319) scale(0.96,1)" font-size="9.9" stroke="#000" stroke-width="0.12">-</text>
<text transform="translate(742,341) scale(0.96,1)" font-size="9.9" stroke="#000" stroke-width="0.12">7</text>
<text transform="translate(742,353) scale(0.93,1)" font-size="6.25">Home</text>
<text transform="translate(778,341) scale(0.96,1)" font-size="9.9" stroke="#000" stroke-width="0.12">8</text>
<text transform="translate(778,353) scale(0.93,1)" font-size="6.25">Up</text>
<text transform="translate(814,341) scale(0.96,1)" font-size="9.9" stroke="#000" stroke-width="0.12">9</text>
<text transform="translate(814,353) scale(0.93,1)" font-size="6.25">PgUp</text>
<text transform="translate(851,341) scale(0.96,1)" font-size="9.9" stroke="#000" stroke-width="0.12">+</text>
<text transform="translate(865,341) scale(0.96,1)" font-size="9.9" stroke="#000" stroke-width="0.12">+</text>
<text transform="translate(742,378) scale(0.96,1)" font-size="9.9" stroke="#000" stroke-width="0.12">4</text>
<text transform="translate(742,389) scale(0.93,1)" font-size="6.25">Left</text>
<text transform="translate(778,378) scale(0.96,1)" font-size="9.9" stroke="#000" stroke-width="0.12">5</text>
<text transform="translate(778,389) scale(0.93,1)" font-size="6.25">Begin</text>
<text transform="translate(814,378) scale(0.96,1)" font-size="9.9" stroke="#000" stroke-width="0.12">6</text>
<text transform="translate(814,389) scale(0.93,1)" font-size="6.25">Right</text>
<text transform="translate(742,414) scale(0.96,1)" font-size="9.9" stroke="#000" stroke-width="0.12">1</text>
<text transform="translate(742,425) scale(0.93,1)" font-size="6.25">End</text>
<text transform="translate(778,414) scale(0.96,1)" font-size="9.9" stroke="#000" stroke-width="0.12">2</text>
<text transform="translate(778,425) scale(0.93,1)" font-size="6.25">Down</text>
<text transform="translate(814,414) scale(0.96,1)" font-size="9.9" stroke="#000" stroke-width="0.12">3</text>
<text transform="translate(814,425) scale(0.93,1)" font-size="6.25">PgDn</text>
<text transform="translate(851,447) scale(0.93,1)" font-size="6.25">Enter</text>
<text transform="translate(742,450) scale(0.96,1)" font-size="9.9" stroke="#000" stroke-width="0.12">0</text>
<text transform="translate(742,462) scale(0.93,1)" font-size="6.25">Ins</text>
<text transform="translate(814,450) scale(0.96,1)" font-size="9.9" stroke="#000" stroke-width="0.12">,</text>
<text transform="translate(814,462) scale(0.93,1)" font-size="6.25">Del</text>
<text transform="translate(738,227) scale(0.93,1)" font-size="6.25">Num</text>
<text transform="translate(738,234) scale(0.93,1)" font-size="6.25">Lock</text>
<text transform="translate(785,227) scale(0.93,1)" font-size="6.25">Caps</text>
<text transform="translate(785,234) scale(0.93,1)" font-size="6.25">Lock</text>
<text transform="translate(833,227) scale(0.93,1)" font-size="6.25">Scroll</text>
<text transform="translate(833,234) scale(0.93,1)" font-size="6.25">Lock</text>
</g>
</svg>
<!-- buttons -->
<div class="a" style="left:16px;top:563px;width:86px;height:30px;background:#fafbfb;border:1px solid #cdcdcd;border-radius:3px"></div>
<div class="a" style="left:734px;top:563px;width:86px;height:30px;background:#fafbfb;border:1px solid #cdcdcd;border-radius:3px"></div>
<div class="a" style="left:828px;top:563px;width:86px;height:30px;background:#ffffff;border:1px solid #cdcdcd;border-radius:3px"></div>
<svg class="a" style="left:0;top:0" width="930" height="608">
<rect x="30.5" y="572" width="9" height="4" fill="#c4c4c4"/>
<path d="M30.5,572.5 H39.5" stroke="#6a6a6a" stroke-width="1"/>
<rect x="32" y="575" width="6" height="1" fill="#5a5a5a"/>
<rect x="29.5" y="576.5" width="11" height="5" rx="1" fill="#fafbfb" stroke="#505050" stroke-width="1"/>
<rect x="37.5" y="577" width="1" height="1" fill="#555"/>
<rect x="32.5" y="579.5" width="5" height="4" fill="#fff" stroke="#505050" stroke-width="1"/>
<rect x="32" y="579" width="6" height="1.3" fill="#505050"/>
<circle cx="751.8" cy="577.8" r="5" fill="none" stroke="#444" stroke-width="0.95"/>
<path d="M748.3,574.3 L755.3,581.3" stroke="#444" stroke-width="0.95"/>
</svg>
<div class="t" style="left:411.20px;top:7.00px;font-size:13px;color:#707070;font-weight:bold;transform:scaleX(0.8444)">Elija una distribución</div><div class="t" style="left:24.30px;top:44.80px;font-size:13px;color:#363636;transform:scaleX(0.9236)">Por país</div><div class="t" style="left:85.20px;top:45.80px;font-size:13px;color:#363636;transform:scaleX(0.9493)">Por idioma</div><div class="t" style="left:30.30px;top:79.60px;font-size:13px;color:#363636;transform:scaleX(0.8784)">País:</div><div class="t" style="left:104.30px;top:79.60px;font-size:13px;color:#363636;transform:scaleX(0.8538)">Grecia</div><div class="t" style="left:30.30px;top:116.60px;font-size:13px;color:#363636;transform:scaleX(0.9453)">Variantes:</div><div class="t" style="left:104.20px;top:116.00px;font-size:13px;color:#363636;transform:scaleX(0.9258)">Griego Griego (politónico)</div><div class="t" style="left:15.60px;top:152.80px;font-size:13px;color:#363636;transform:scaleX(0.9257)">Vista previa:</div><div class="t" style="left:45.40px;top:571.60px;font-size:13px;color:#363636;transform:scaleX(0.9712)">Imprimir</div><div class="t" style="left:762.00px;top:571.60px;font-size:13px;color:#363636;transform:scaleX(0.9231)">Cancelar</div><div class="t" style="left:862.00px;top:571.60px;font-size:13px;color:#363636;transform:scaleX(0.9574)">Añadir</div>
<svg class="a" style="left:0;top:0" width="930" height="608">
<defs><filter id="sh" x="-50%" y="-50%" width="200%" height="200%"><feGaussianBlur stdDeviation="0.9"/></filter></defs>
<path d="M851.5,573.5 V576 M855,578.5 H857.5" stroke="#555" stroke-width="1"/>
<path d="M846,586 L849.5,582.5 L852,588.5 L854.5,587.5 L852,582 L856.5,582 Z" fill="#000" opacity="0.35" filter="url(#sh)" transform="translate(0.5,1.5)"/>
<path d="M845.2,569.2 L857,580.6" stroke="#888" stroke-width="0.5"/>
<path d="M845.6,571.2 L845.6,585.8 L849.3,582.2 L851.9,588.2 L854.7,587.1 L852.4,581.3 L856.9,581.3 Z" fill="#000" stroke="#fff" stroke-width="1.2" stroke-linejoin="miter" paint-order="stroke"/>
</svg>
</body></html>
